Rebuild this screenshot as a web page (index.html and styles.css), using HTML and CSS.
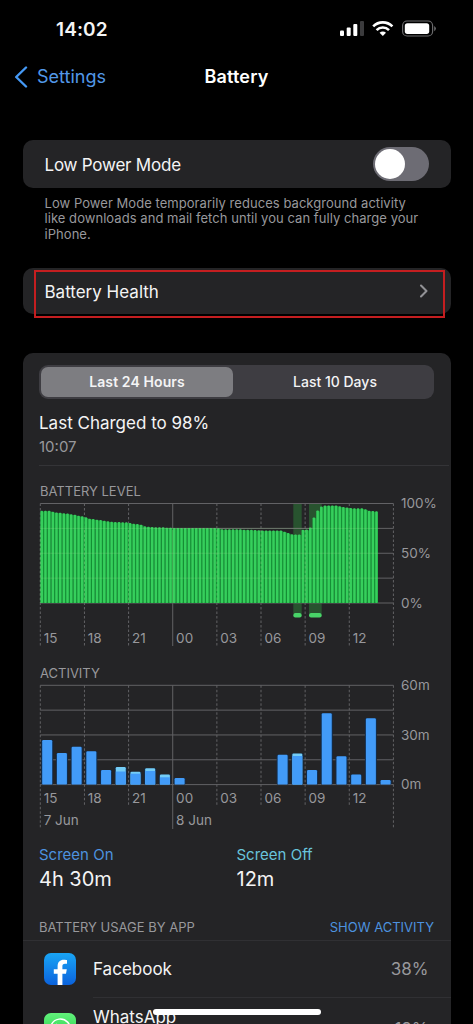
FILE: index.html
```html
<!DOCTYPE html>
<html lang="en">
<head>
<meta charset="utf-8">
<title>Battery</title>
<link rel="stylesheet" href="styles.css">
</head>
<body>
<div class="phone">
  <header class="status">
    <span class="time">14:02</span>
    <svg class="status-icons" width="100" height="20" viewBox="0 0 100 20">
      <g fill="#fff">
        <rect x="1" y="11.500" width="4" height="5.500" rx="1"/>
        <rect x="7.700" y="8.500" width="4" height="8.500" rx="1"/>
        <rect x="14.300" y="5" width="4" height="12" rx="1"/>
        <rect x="21" y="2" width="4" height="15" rx="1" fill="#3b3b3d"/>
        <path d="M43.800 17L40.600 13.800A4.600 4.600 0 0 1 47 13.800Z"/>
      </g>
      <g fill="none" stroke="#fff" stroke-width="2.600">
        <path d="M34.200 7.300A13.600 13.600 0 0 1 53.400 7.300"/>
        <path d="M37.600 11.100A8.800 8.800 0 0 1 50 11.100"/>
      </g>
      <rect x="63.600" y="2" width="30" height="15" rx="4.500" fill="none" stroke="#6a6a6c" stroke-width="1.200"/>
      <rect x="65.800" y="4.200" width="24.400" height="10.700" rx="2.600" fill="#fff"/>
      <path d="M95.200 6.900q1.700 1 1.700 2.700t-1.700 2.700z" fill="#6a6a6c"/>
    </svg>
  </header>

  <nav class="nav">
    <a class="back">
      <svg width="14" height="22" viewBox="0 0 14 22"><path d="M12 1.500L2.200 11L12 20.500" fill="none" stroke="#4599f5" stroke-width="2.400" stroke-linecap="round" stroke-linejoin="round"/></svg>
      <span>Settings</span>
    </a>
    <h1>Battery</h1>
  </nav>

  <main>
    <section class="card row low-power">
      <span class="label">Low Power Mode</span>
      <span class="toggle"><span class="knob"></span></span>
    </section>
    <p class="footnote">Low Power Mode temporarily reduces background activity<br>like downloads and mail fetch until you can fully charge your<br>iPhone.</p>

    <section class="card row health">
      <span class="label">Battery Health</span>
      <svg width="10" height="14" viewBox="0 0 10 14"><path d="M2 1.500L7.500 7L2 12.500" fill="none" stroke="#929296" stroke-width="2.100" stroke-linecap="round" stroke-linejoin="round"/></svg>
      <span class="marker"></span>
    </section>

    <section class="card usage">
      <div class="segmented">
        <span class="segment selected">Last 24 Hours</span>
        <span class="segment">Last 10 Days</span>
      </div>
      <div class="charged">
        <strong>Last Charged to 98%</strong>
        <span>10:07</span>
      </div>
      <h2 class="caption level-title">BATTERY LEVEL</h2>
      <svg class="chart" id="level" width="411" height="150" viewBox="39 500 411 150"></svg>
      <h2 class="caption activity-title">ACTIVITY</h2>
      <svg class="chart" id="activity" width="411" height="150" viewBox="39 682 411 150"></svg>
      <div class="totals">
        <div class="total"><span class="on">Screen On</span><b>4h 30m</b></div>
        <div class="total"><span class="off">Screen Off</span><b>12m</b></div>
      </div>
      <div class="list-head">
        <h2 class="caption">BATTERY USAGE BY APP</h2>
        <a>SHOW ACTIVITY</a>
      </div>
      <div class="app">
        <svg width="32" height="32" viewBox="0 0 32 32">
          <defs><linearGradient id="fb" x2="0" y2="1"><stop offset="0" stop-color="#19a5f5"/><stop offset="1" stop-color="#0b62dc"/></linearGradient></defs>
          <rect width="32" height="32" rx="7" fill="url(#fb)"/>
          <path d="M13.600 32V20.700H9.800V16.300H13.600V13.200C13.600 8.900 16 6.700 19.900 6.700C21.500 6.700 23 7 23 7V10.800H21C19 10.800 18.400 12 18.400 13.300V16.300H22.800L22 20.700H18.400V32Z" fill="#fff"/>
        </svg>
        <div class="app-body"><span>Facebook</span><span class="pct">38%</span></div>
      </div>
      <div class="app second">
        <svg width="32" height="32" viewBox="0 0 32 32">
          <defs><linearGradient id="wa" x2="0" y2="1"><stop offset="0" stop-color="#62f27b"/><stop offset="1" stop-color="#16c43b"/></linearGradient></defs>
          <rect width="32" height="32" rx="7" fill="url(#wa)"/>
          <path d="M6 26l1.500-5.300A10 10 0 1 1 11.200 24.600Z" fill="none" stroke="#fff" stroke-width="1.500"/>
          <path d="M12.500 10.500c-2 2-1 5 2 8s6 4 8 2l-3-2.500-1.500 1c-2-1-3-2-4-4l1-1.500z" fill="#fff"/>
        </svg>
        <div class="app-body"><span>WhatsApp</span><span class="pct">18%</span></div>
      </div>
    </section>
  </main>
  <div class="home"></div>
</div>
<script src="charts.js"></script>
</body>
</html>
```
FILE: styles.css
```css
* { box-sizing: border-box; }
body {
  margin: 0;
  background: #000;
  color: #f4f4f5;
  font-family: Inter, "Liberation Sans", sans-serif;
}
.phone {
  position: relative;
  width: 473px;
  height: 1024px;
  overflow: hidden;
  background: #000;
}
h1, h2, p { margin: 0; }

.status {
  height: 57px;
  padding: 0 35px 0 56px;
  display: flex;
  align-items: center;
  justify-content: space-between;
}
.time { padding-top: 1px; font-size: 19px; font-weight: 600; letter-spacing: 0.1px; }
.status-icons { margin-right: -1px; }

.nav {
  height: 40px;
  display: grid;
  grid-template-columns: 1fr auto 1fr;
  align-items: center;
}
.back {
  display: flex;
  align-items: center;
  gap: 9px;
  padding-left: 14px;
  color: #5298e9;
  font-size: 18px;
}
.back span, .nav h1 { margin-top: -1px; }
.nav h1 { font-size: 18px; font-weight: 600; letter-spacing: 0.2px; color: #fff; }

main { padding: 43px 22.5px 0; }
.card { background: #242426; border-radius: 10px; }
.row {
  display: flex;
  align-items: center;
  justify-content: space-between;
  padding: 0 22px;
  font-size: 17px;
}
.row .label { padding-top: 2px; }
.low-power { height: 48px; }
.low-power .label { letter-spacing: -0.22px; }
.toggle {
  width: 56px;
  height: 34px;
  padding: 2px;
  border-radius: 17px;
  background: #6d6c74;
}
.knob { display: block; width: 30px; height: 30px; border-radius: 50%; background: #fff; }
.footnote {
  height: 80px;
  padding: 7.5px 0 0 22px;
  color: #98989c;
  font-size: 13px;
  line-height: 15.5px;
  letter-spacing: 0.05px;
  white-space: nowrap;
}
.health { position: relative; height: 46px; }
.marker {
  position: absolute;
  left: 11.5px;
  top: 2px;
  width: 411px;
  height: 48px;
  border: 2px solid #c41e20;
}

.usage {
  height: 690px;
  margin-top: 39px;
  padding: 12px 0 0 16.5px;
}
.segmented {
  width: 395px;
  height: 34px;
  padding: 2px;
  display: grid;
  grid-template-columns: 192px 1fr;
  border-radius: 9px;
  background: #3e3d42;
}
.segment {
  display: flex;
  align-items: center;
  justify-content: center;
  padding: 0 0 1px 5px;
  border-radius: 7px;
  font-size: 14px;
  font-weight: 500;
}
.selected { padding-left: 0; background: #7d7d81; font-weight: 600; letter-spacing: 0.1px; }
.charged {
  display: flex;
  flex-direction: column;
  height: 67px;
  margin-right: 2px;
  padding-top: 12px;
  border-bottom: 1px solid #343437;
}
.charged strong { font-size: 17px; font-weight: 400; line-height: 24px; }
.charged span { font-size: 15px; line-height: 23px; color: #98989c; }
.caption { font-size: 13px; font-weight: 400; line-height: 16px; color: #98989c; }
.level-title, .activity-title { padding-left: 1px; }
.level-title { margin-top: 17px; }
.chart { display: block; overflow: visible; }
.level-title + .chart { margin-top: 1px; }
.activity-title { margin-top: 15px; }
.activity-title + .chart { margin-top: 1px; }
.chart text { font-family: Inter, sans-serif; font-size: 13.5px; fill: #98989c; }

.totals { display: grid; grid-template-columns: 197.5px 1fr; padding-top: 13px; }
.total span, .total b { display: block; font-weight: 400; }
.total span { font-size: 15px; line-height: 20px; }
.total b { font-size: 20px; line-height: 28px; }
.on { color: #4d92df; }
.off { color: #69c4dc; }
.list-head {
  display: flex;
  justify-content: space-between;
  align-items: flex-end;
  height: 48px;
  margin-left: -16.5px;
  padding: 0 16.5px 5px;
  border-bottom: 1px solid #303033;
}
.list-head a { font-size: 13px; line-height: 16px; color: #4d92df; }
.app { display: flex; height: 57px; padding: 12px 0 0 5px; }
.app svg { flex: none; }
.app-body {
  flex: 1;
  display: flex;
  align-items: center;
  justify-content: space-between;
  height: 45px;
  margin-left: 17px;
  padding: 0 22px 12px 0;
  border-bottom: 1px solid #303033;
  font-size: 17px;
}
.pct { color: #98989c; }
.second { padding-top: 15px; }
.second .app-body { align-items: flex-start; line-height: 20px; }
.second .app-body span:first-child { margin-top: -6px; }
.second .pct { margin-top: 6px; }
.home {
  position: absolute;
  left: 153px;
  top: 1009px;
  width: 168px;
  height: 6px;
  border-radius: 3px;
  background: #fff;
}
```
FILE: charts.js
```js
const LEFT = 40.3, RIGHT = 393.4, HOUR = 44.14;
const hours = ["15", "18", "21", "00", "03", "06", "09", "12"];

const line = (x1, y1, x2, y2, dashed, color) =>
  `<line x1="${x1}" y1="${y1}" x2="${x2}" y2="${y2}" stroke="${color || "#626265"}" stroke-width="1"${dashed ? ' stroke-dasharray="2.5 2"' : ""}/>`;
const rect = (x, y, w, h, fill, rx) =>
  `<rect x="${x}" y="${y}" width="${w}" height="${h}" fill="${fill}" rx="${rx || 0}"/>`;
const text = (x, y, s) => `<text x="${x}" y="${y}">${s}</text>`;

function grid(top, bottom, step, tickEnd, outerEnd) {
  let out = "";
  for (let i = 0; i < 5; i++) out += line(LEFT, top + i * step, RIGHT, top + i * step);
  for (let i = 0; i < 9; i++) {
    const x = LEFT + i * HOUR;
    const end = i === 0 || i === 3 || i === 8 ? outerEnd : tickEnd;
    out += line(x, top, x, end, i !== 3);
  }
  return out;
}
function hourLabels(y) {
  return hours.map((h, i) => text(LEFT + i * HOUR + 3.4, y, h)).join("");
}

// Battery level: one bar for each quarter hour, as the height above zero.
const levels = [
  92.3, 92.3, 92.3, 91.3, 90.5, 90.3, 89.7, 89.5, 88.7, 88.3, 87.3, 86.7,
  85.7, 84.3, 84, 83.3, 83, 82.3, 81.7, 81.3, 81, 81, 80.7, 80.7,
  80, 79.3, 79, 78.3, 76.7, 76.3, 76, 75.7, 75.7, 75.7, 75.3, 75.3,
  75, 75, 75, 75, 75, 75, 75, 75, 75, 75, 75, 75,
  74.7, 73.7, 73.7, 73.7, 73.7, 73.7, 73.7, 73.3, 73.3, 73.3, 73, 72.7,
  72.5, 72.5, 72.5, 72.5, 72.5, 72.5, 71.3, 70, 68.7, 68.5, 68.5, 73.3,
  73.5, 75.5, 85.5, 92.5, 96.5, 97.5, 97.5, 97.5, 97.5, 96.7, 96, 95.5,
  95, 94.7, 94.7, 94.7, 93.7, 92.3, 92, 91.7
];
let level = rect(293.3, 503.5, 8.4, 110, "#28532f") + rect(309, 503.5, 12.7, 110, "#28532f");
level += grid(503.5, 603, 24.875, 646, 646);
const slot = HOUR / 12;
levels.forEach((v, i) => {
  const x = LEFT + 0.2 + i * slot;
  level += rect(x, 603 - v + 0.8, i < 91 ? slot : 2.6, v - 0.8, "#159036");
  level += rect(x, 603 - v, 2.5, v, "#36cf5c", 0.8);
});
for (let i = 1; i < 4; i++) level += line(LEFT, 503.5 + i * 24.875, 378, 503.5 + i * 24.875, false, "rgba(160,225,150,.2)");
for (let i = 0; i < 8; i++) level += line(LEFT + i * HOUR, 530, LEFT + i * HOUR, 603, i !== 3, "rgba(160,225,150,.35)");
level += rect(293.3, 613, 8.4, 4.5, "#48d568", 2) + rect(309, 613, 12.7, 4.5, "#48d568", 2);
level += hourLabels(643.4) + text(401, 508.3, "100%") + text(401, 558.2, "50%") + text(401, 607.9, "0%");
document.getElementById("level").innerHTML = level;

// Activity: [hour slot, top, end of the screen-off part].
const activity = [
  [0, 740], [1, 753], [2, 746.7], [3, 751.3], [4, 770], [5, 767, 771.5],
  [6, 771.7, 773.7], [7, 768.3, 771], [8, 774.5, 777.3], [9, 778],
  [16, 754.7], [17, 753.5, 756], [18, 770], [19, 713.3], [20, 756.3],
  [21, 774.5], [22, 718.3], [23, 780]
];
let act = grid(685.3, 784.6, 24.825, 805, 829);
activity.forEach(([i, top, off]) => {
  const x = 42.2 + i * HOUR / 3;
  act += rect(x - 1, top, 12, 784.6 - top, "#122c4b", 1);
  act += rect(x, top, 10, 784.6 - top, off ? "#74cdf6" : "#429bf8", 1.2);
  if (off) act += rect(x, off, 10, 784.6 - off, "#429bf8");
});
act += hourLabels(803) + text(43.7, 825, "7 Jun") + text(176.1, 825, "8 Jun");
act += text(401, 690.2, "60m") + text(401, 739.9, "30m") + text(401, 789.4, "0m");
document.getElementById("activity").innerHTML = act;
```
